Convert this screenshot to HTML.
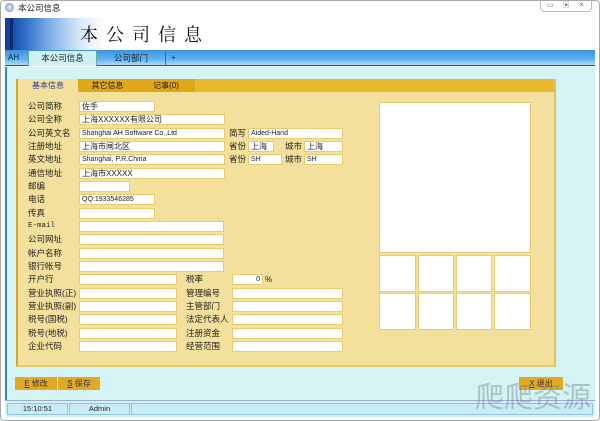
<!DOCTYPE html><html><head><meta charset="utf-8"><style>
*{margin:0;padding:0;box-sizing:border-box}
body{width:600px;height:421px;overflow:hidden;background:#fff;font-family:"Liberation Sans","Noto Sans CJK SC",sans-serif;font-size:8px;color:#222;position:relative}
.a{position:absolute}
.lb{position:absolute;left:28px;font-size:8.5px;line-height:11px}
.rl{position:absolute;left:186px;font-size:8.5px;line-height:11px}
.in{position:absolute;height:11px;background:#fff;border:1px solid #e9cc70;font-size:7px;line-height:9px;padding-left:2px;white-space:nowrap;overflow:hidden}
.bx{position:absolute;background:#fff;border:1px solid #e9cc70}
.btn{position:absolute;top:377px;height:13px;background:#e2aa22;font-size:8px;line-height:13px;text-align:center;color:#333}
.sc{position:absolute;top:403px;height:12px;background:#c9ecf8;border:1px solid #8cc6dc;font-size:7.5px;line-height:10px;text-align:center}
</style></head><body>
<div class="a" style="left:0;top:0;width:600px;height:421px;border:1px solid #a8a8a8;border-radius:4px"></div>
<div class="a" style="left:5px;top:3px;width:9px;height:9px;border-radius:50%;background:radial-gradient(#f4f4f4,#5a7bb0)"></div>
<div class="a" style="left:18px;top:3px;font-size:8.5px;line-height:10px">本公司信息</div>
<div class="a" style="left:540px;top:0;width:52px;height:12px;border:1px solid #bbb;border-top:none;border-radius:0 0 4px 4px;font-size:7px;color:#777;line-height:11px;letter-spacing:9px;padding-left:6px">▭▣✕</div>
<div class="a" style="left:5px;top:18px;width:100px;height:32px;background:linear-gradient(90deg,#0d3c9a 0%,#2d6cc8 20%,#7fb0e8 45%,#d8e8f8 75%,#fff 100%)"></div>
<div class="a" style="left:10px;top:18px;width:3px;height:32px;background:#0a2a70"></div>
<div class="a" style="left:80px;top:22px;font-size:18px;letter-spacing:8px;line-height:24px;color:#111;font-family:'Noto Serif CJK SC',serif">本公司信息</div>
<div class="a" style="left:5px;top:50px;width:590px;height:16px;background:linear-gradient(#3d93dc,#5fb2f2 60%,#a8dcfc);border-bottom:1px solid #1d5f76"></div>
<div class="a" style="left:8px;top:53px;font-size:8px;color:#123">AH</div>
<div class="a" style="left:28px;top:51px;width:69px;height:15px;background:#cdf1f6;border-left:1px solid #6aa;border-right:1px solid #6aa;text-align:center;line-height:15px;font-size:8.5px">本公司信息</div>
<div class="a" style="left:97px;top:51px;width:69px;height:15px;border-right:1px solid #2a70b0;text-align:center;line-height:15px;font-size:8.5px">公司部门</div>
<div class="a" style="left:171px;top:53px;font-size:8px">+</div>
<div class="a" style="left:5px;top:67px;width:590px;height:333px;background:#d4f4f4;border-left:2px solid #3a8aa0"></div>
<div class="a" style="left:16px;top:79px;width:540px;height:288px;background:#f3e09c;border-left:2px solid #d6a628;border-right:2px solid #e5c060;border-bottom:2px solid #e6c666"></div>
<div class="a" style="left:18px;top:79px;width:536px;height:13px;background:#e8b92e"></div>
<div class="a" style="left:18px;top:79px;width:60px;height:14px;background:#f3e09c;color:#2a3a9a;text-align:center;line-height:14px;font-size:8px">基本信息</div>
<div class="a" style="left:78px;top:79px;width:59px;height:13px;background:#e0a818;text-align:center;line-height:13px;font-size:8px">其它信息</div>
<div class="a" style="left:137px;top:79px;width:58px;height:13px;background:#e0a818;text-align:center;line-height:13px;font-size:8px">记事(0)</div>

<div class="lb" style="top:101px">公司简称</div><div class="in" style="left:79px;top:101px;width:76px;font-size:8px">佐手</div>
<div class="lb" style="top:114px">公司全称</div><div class="in" style="left:79px;top:114px;width:146px;font-size:8px">上海XXXXXX有限公司</div>
<div class="lb" style="top:128px">公司英文名</div><div class="in" style="left:79px;top:128px;width:146px">Shanghai AH Software Co.,Ltd</div>
<div class="lb" style="top:141px">注册地址</div><div class="in" style="left:79px;top:141px;width:146px;font-size:8px">上海市闸北区</div>
<div class="lb" style="top:154px">英文地址</div><div class="in" style="left:79px;top:154px;width:146px">Shanghai, P.R.China</div>
<div class="lb" style="top:168px">通信地址</div><div class="in" style="left:79px;top:168px;width:146px;font-size:8px">上海市XXXXX</div>
<div class="lb" style="top:181px">邮编</div><div class="in" style="left:79px;top:181px;width:51px"></div>
<div class="lb" style="top:194px">电话</div><div class="in" style="left:79px;top:194px;width:76px">QQ:1933546285</div>
<div class="lb" style="top:208px">传真</div><div class="in" style="left:79px;top:208px;width:76px"></div>
<div class="lb" style="top:221px;font-family:'Liberation Mono',monospace;font-size:7.5px">E-mail</div><div class="in" style="left:79px;top:221px;width:145px"></div>
<div class="lb" style="top:234px">公司网址</div><div class="in" style="left:79px;top:234px;width:145px"></div>
<div class="lb" style="top:248px">帐户名称</div><div class="in" style="left:79px;top:248px;width:145px"></div>
<div class="lb" style="top:261px">银行帐号</div><div class="in" style="left:79px;top:261px;width:145px"></div>
<div class="lb" style="top:274px">开户行</div><div class="in" style="left:79px;top:274px;width:98px"></div>
<div class="lb" style="top:288px">营业执照(正)</div><div class="in" style="left:79px;top:288px;width:98px"></div>
<div class="lb" style="top:301px">营业执照(副)</div><div class="in" style="left:79px;top:301px;width:98px"></div>
<div class="lb" style="top:314px">税号(国税)</div><div class="in" style="left:79px;top:314px;width:98px"></div>
<div class="lb" style="top:328px">税号(地税)</div><div class="in" style="left:79px;top:328px;width:98px"></div>
<div class="lb" style="top:341px">企业代码</div><div class="in" style="left:79px;top:341px;width:98px"></div>

<div class="a" style="left:229px;top:128px;font-size:8.5px;line-height:11px">简写</div><div class="in" style="left:248px;top:128px;width:95px">Aided-Hand</div>
<div class="a" style="left:229px;top:141px;font-size:8.5px;line-height:11px">省份</div><div class="in" style="left:248px;top:141px;width:26px;font-size:8px">上海</div>
<div class="a" style="left:285px;top:141px;font-size:8.5px;line-height:11px">城市</div><div class="in" style="left:304px;top:141px;width:39px;font-size:8px">上海</div>
<div class="a" style="left:229px;top:154px;font-size:8.5px;line-height:11px">省份</div><div class="in" style="left:248px;top:154px;width:34px">SH</div>
<div class="a" style="left:285px;top:154px;font-size:8.5px;line-height:11px">城市</div><div class="in" style="left:304px;top:154px;width:39px">SH</div>

<div class="rl" style="top:274px">税率</div><div class="in" style="left:232px;top:274px;width:31px;text-align:right;padding-right:2px">0</div><div class="a" style="left:265px;top:275px;font-size:8px">%</div>
<div class="rl" style="top:288px">管理编号</div><div class="in" style="left:232px;top:288px;width:111px"></div>
<div class="rl" style="top:301px">主管部门</div><div class="in" style="left:232px;top:301px;width:111px"></div>
<div class="rl" style="top:314px">法定代表人</div><div class="in" style="left:232px;top:314px;width:111px"></div>
<div class="rl" style="top:328px">注册资金</div><div class="in" style="left:232px;top:328px;width:111px"></div>
<div class="rl" style="top:341px">经营范围</div><div class="in" style="left:232px;top:341px;width:111px"></div>

<div class="bx" style="left:379px;top:102px;width:152px;height:151px"></div>
<div class="bx" style="left:379px;top:255px;width:37px;height:37px"></div>
<div class="bx" style="left:418px;top:255px;width:36px;height:37px"></div>
<div class="bx" style="left:456px;top:255px;width:36px;height:37px"></div>
<div class="bx" style="left:494px;top:255px;width:37px;height:37px"></div>
<div class="bx" style="left:379px;top:293px;width:37px;height:37px"></div>
<div class="bx" style="left:418px;top:293px;width:36px;height:37px"></div>
<div class="bx" style="left:456px;top:293px;width:36px;height:37px"></div>
<div class="bx" style="left:494px;top:293px;width:37px;height:37px"></div>

<div class="btn" style="left:15px;width:42px"><u>E</u> 修改</div>
<div class="btn" style="left:58px;width:42px"><u>S</u> 保存</div>
<div class="btn" style="left:519px;width:44px"><u>X</u> 退出</div>

<div class="a" style="left:5px;top:400px;width:590px;height:17px;background:#d4f4f4;border-top:1px solid #9ad"></div>
<div class="sc" style="left:7px;width:61px">15:10:51</div>
<div class="sc" style="left:69px;width:61px">Admin</div>
<div class="sc" style="left:131px;width:462px"></div>
<div class="a" style="left:475px;top:382px;font-size:29px;line-height:32px;color:rgba(110,120,130,.4);letter-spacing:0">爬爬资源</div>
</body></html>
